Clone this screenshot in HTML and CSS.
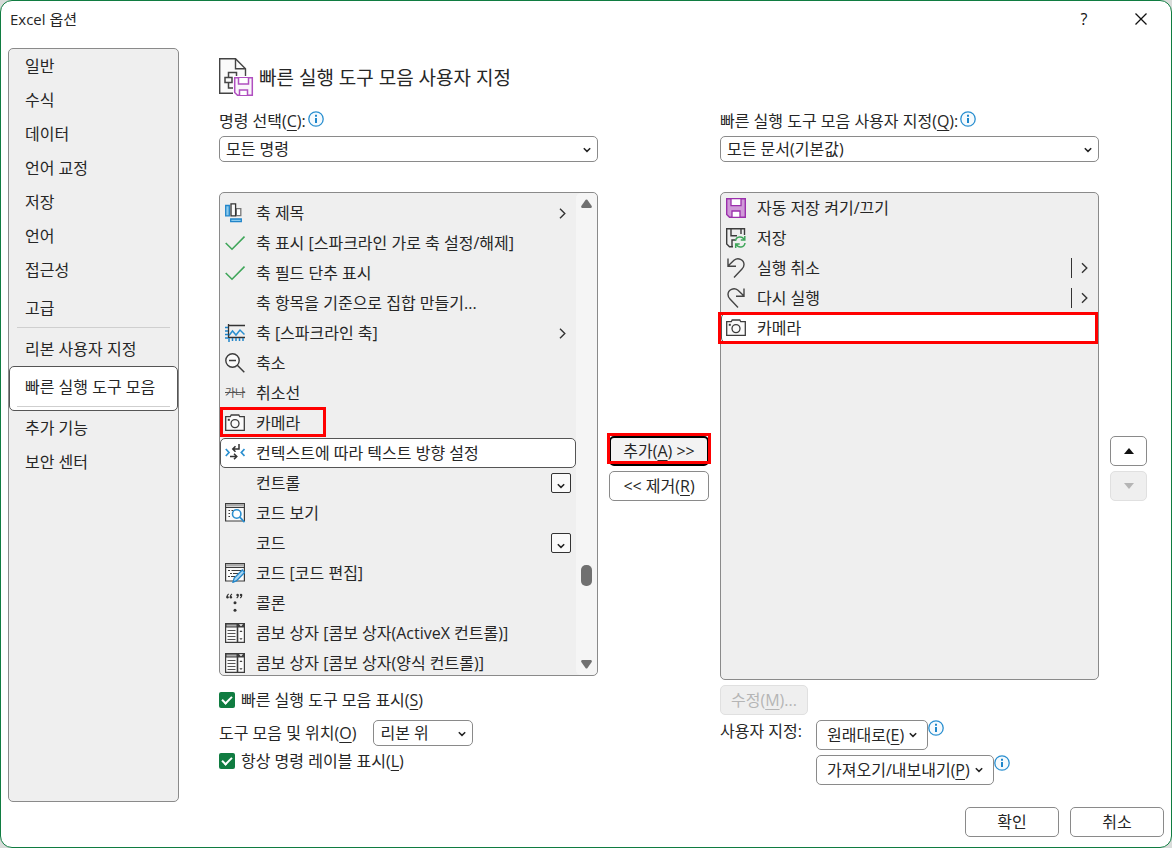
FILE: index.html
```html
<!DOCTYPE html>
<html lang="ko">
<head>
  <meta charset="UTF-8">
  <meta name="viewport" content="width=device-width, initial-scale=1.0">
  <title>Excel 옵션</title>
  <link rel="stylesheet" href="styles.css">
</head>
<body>

  <!-- shared icons -->
  <svg class="defs" width="0" height="0" aria-hidden="true">
    <symbol id="chev-down" viewBox="0 0 8 6"><path d="M.8 1.2 4 4.4 7.2 1.2" fill="none" stroke="#222" stroke-width="1.5"/></symbol>
    <symbol id="chev-right" viewBox="0 0 7 11"><path d="M1 .8 5.8 5.5 1 10.2" fill="none" stroke="#333" stroke-width="1.4"/></symbol>
    <symbol id="info" viewBox="0 0 16 16">
      <circle cx="8" cy="8" r="7.2" fill="#f5fafd" stroke="#2a8fd0" stroke-width="1.3"/>
      <path d="M7 3.8h2v2H7zM7 7h2v5H7z" fill="#1e86cb"/>
    </symbol>
    <symbol id="check" viewBox="0 0 20 20"><path d="M.7 10 7 16.2 19.5 3.6" fill="none" stroke="#3fa65a" stroke-width="1.6"/></symbol>
    <symbol id="camera" viewBox="0 0 20 20">
      <path d="M.7 3.700h4.600L6.200 2h7.600l.9 1.700h4.600v13.600H.7z" fill="#fafafa" stroke="#3c3c3c" stroke-width="1.3"/>
      <circle cx="10" cy="10.600" r="4" fill="none" stroke="#3c3c3c" stroke-width="1.3"/>
      <path d="M2.800 5.800h2v2h-2z" fill="#3c3c3c"/>
    </symbol>
    <symbol id="combo" viewBox="0 0 20 20">
      <path d="M.6.6h18.8v18.8H.6z" fill="#fafafa" stroke="#3c3c3c" stroke-width="1.2"/>
      <path d="M0 0h20v4.5H0z" fill="#3c3c3c"/>
      <path d="M1.500 1.500h10v2h-10z" fill="#aaa"/>
      <path d="M12.500 4v16" stroke="#3c3c3c" stroke-width="1.600"/>
      <path d="M2.500 7.500h8M2.500 10.500h8M2.500 13.500h8M2.500 16.500h8" stroke="#555"/>
      <path d="M14 1.300h4l-2 2z" fill="#fff"/>
      <path d="M14.400 9h3.200L16 7.200zM14.400 15.300h3.200L16 17z" fill="#3c3c3c"/>
    </symbol>
  </svg>

  <div class="dialog">
    <header class="titlebar">
      <span class="title">Excel 옵션</span>
      <button class="title-button help" aria-label="도움말">?</button>
      <button class="title-button" aria-label="닫기">
        <svg width="12" height="12" viewBox="0 0 12 12"><path d="M.5.5l11 11M11.5.5l-11 11" stroke="#111" stroke-width="1.3"/></svg>
      </button>
    </header>

    <div class="content">
      <nav class="sidebar">
        <a href="#">일반</a>
        <a href="#">수식</a>
        <a href="#">데이터</a>
        <a href="#">언어 교정</a>
        <a href="#">저장</a>
        <a href="#">언어</a>
        <a href="#">접근성</a>
        <a href="#" class="divided">고급</a>
        <a href="#">리본 사용자 지정</a>
        <a href="#" class="divided active">빠른 실행 도구 모음</a>
        <a href="#">추가 기능</a>
        <a href="#">보안 센터</a>
      </nav>

      <main class="page">
        <h1 class="page-title">
          <svg width="36" height="39" viewBox="0 0 36 39">
            <path d="M.7.7h15.800l10 10V35.300H.7z" fill="#fafafa" stroke="#444" stroke-width="1.4"/>
            <path d="M16.500.7v10h10" fill="none" stroke="#444" stroke-width="1.4"/>
            <path d="M9.500 19v-4.500h8v4M6 19.500h7v5H6zM9.500 25v5h5" fill="none" stroke="#444" stroke-width="1.5"/>
            <path d="M14 18h22v21H17l-3-3z" fill="#fff"/>
            <path d="M15.700 19.700h17.600v17.600H18.500l-2.800-2.800z" fill="#faf5fb" stroke="#b04fc0" stroke-width="1.5"/>
            <path d="M19.500 20v6h10v-6M20.500 37v-5h8v5" fill="#fff" stroke="#b04fc0" stroke-width="1.5"/>
          </svg>
          빠른 실행 도구 모음 사용자 지정
        </h1>

        <div class="columns">
          <section class="column">
            <div class="field-label">
              <label for="commands">명령 선택(<u>C</u>):</label>
              <svg class="info" width="16" height="16"><use href="#info"/></svg>
            </div>
            <div class="dropdown">
              <select id="commands"><option>모든 명령</option></select>
              <svg class="arrow" width="8" height="6"><use href="#chev-down"/></svg>
            </div>

            <div class="listbox">
              <ul class="items scrolled" role="listbox" aria-label="명령">
                <li role="option">
                  <svg class="icon" viewBox="0 0 20 20">
                    <path d="M.7 2.5h3.600v10.300H.7z" fill="#8ccbee" stroke="#2185c9" stroke-width="1.3"/>
                    <path d="M11.300 5.700h4.500v7h-4.500z" fill="#fff" stroke="#777" stroke-width="1.3"/>
                    <path d="M6 .9h4.600v12H6z" fill="#fafafa" stroke="#333" stroke-width="1.3"/>
                    <path d="M5.700 16h10.600v2.600H5.700z" fill="#8ccbee" stroke="#2185c9" stroke-width="1.3"/>
                  </svg>
                  <span>축 제목</span>
                  <svg class="more" width="7" height="11"><use href="#chev-right"/></svg>
                </li>
                <li role="option">
                  <svg class="icon"><use href="#check"/></svg>
                  <span>축 표시 [스파크라인 가로 축 설정/해제]</span>
                </li>
                <li role="option">
                  <svg class="icon"><use href="#check"/></svg>
                  <span>축 필드 단추 표시</span>
                </li>
                <li role="option">
                  <i class="icon"></i>
                  <span>축 항목을 기준으로 집합 만들기...</span>
                </li>
                <li role="option">
                  <svg class="icon" viewBox="0 0 20 20">
                    <path d="M3.500 2.500H20M3.500 14.500H20" stroke="#333" stroke-width="1.3"/>
                    <path d="M3.500 1v14" stroke="#333" stroke-width="1.3"/>
                    <path d="M0 4.500h3M0 8h3M0 11.500h3M0 15h3M4 15v4M7.500 15v3M11 15v3M14.500 15v3M18 15v3" stroke="#2185c9" stroke-width="1.5"/>
                    <path d="M4 12.500 7.500 8l3.500 4 4-5 4.500 4.500" fill="none" stroke="#2a8fd0" stroke-width="1.5"/>
                  </svg>
                  <span>축 [스파크라인 축]</span>
                  <svg class="more" width="7" height="11"><use href="#chev-right"/></svg>
                </li>
                <li role="option">
                  <svg class="icon" viewBox="0 0 20 20">
                    <circle cx="7.500" cy="7.500" r="6.700" fill="#fafafa" stroke="#3c3c3c" stroke-width="1.4"/>
                    <path d="M4 7.500h7M12.300 12.300l7 7" stroke="#3c3c3c" stroke-width="1.5"/>
                  </svg>
                  <span>축소</span>
                </li>
                <li role="option">
                  <s class="icon strike">가나</s>
                  <span>취소선</span>
                </li>
                <li role="option" class="marked">
                  <svg class="icon"><use href="#camera"/></svg>
                  <span>카메라</span>
                </li>
                <li role="option" class="selected" aria-selected="true">
                  <svg class="icon" viewBox="0 0 20 20">
                    <path d="M.8 6 4 9.500.8 13M19.500 6l-3.200 3.500 3.200 3.500" fill="none" stroke="#2a8fd0" stroke-width="1.7"/>
                    <path d="M14 1v5H8M10.500 3.300 7.800 6l2.700 2.700M5 13.500h6.500M9 10.700l2.800 2.800L9 16.300" fill="none" stroke="#333" stroke-width="1.5"/>
                  </svg>
                  <span>컨텍스트에 따라 텍스트 방향 설정</span>
                </li>
                <li role="option">
                  <i class="icon"></i>
                  <span>컨트롤</span>
                  <i class="gallery"><svg width="8" height="6"><use href="#chev-down"/></svg></i>
                </li>
                <li role="option">
                  <svg class="icon" viewBox="0 0 20 20">
                    <path d="M.6.600h18.800v17.400H.6z" fill="#fafafa" stroke="#3c3c3c" stroke-width="1.2"/>
                    <path d="M1 1h18v2.500H1z" fill="#aaa"/>
                    <path d="M1 4.500h18" stroke="#3c3c3c"/>
                    <path d="M3.500 7.500h1.500M3.500 10.500h1.500M3.500 13.500h1.500M6.500 7.500h2" stroke="#3c3c3c" stroke-width="1.2"/>
                    <circle cx="11.700" cy="11" r="4.200" fill="#fff" stroke="#2a8fd0" stroke-width="1.6"/>
                    <path d="M14.800 14.200l4.700 5" stroke="#2a8fd0" stroke-width="1.8"/>
                  </svg>
                  <span>코드 보기</span>
                </li>
                <li role="option">
                  <i class="icon"></i>
                  <span>코드</span>
                  <i class="gallery"><svg width="8" height="6"><use href="#chev-down"/></svg></i>
                </li>
                <li role="option">
                  <svg class="icon" viewBox="0 0 20 20">
                    <path d="M.6.600h18.800v17.400H.6z" fill="#fafafa" stroke="#3c3c3c" stroke-width="1.2"/>
                    <path d="M1 1h18v2.500H1z" fill="#aaa"/>
                    <path d="M1 4.500h18" stroke="#3c3c3c"/>
                    <path d="M3 7.500h2M6.500 7.500H16M5 10.500h2M8 10.500h6M3 13.500h2M6 13.500h4" stroke="#3c3c3c"/>
                    <path d="M8 19.300l1.200-4.200L17.300 7l2.300 2.400-8 8.300z" fill="#a9d6f2" stroke="#2185c9" stroke-width="1.3"/>
                  </svg>
                  <span>코드 [코드 편집]</span>
                </li>
                <li role="option">
                  <svg class="icon" viewBox="0 0 20 20">
                    <g fill="none" stroke="#333" stroke-width="1.2">
                      <path d="M3.700 1C2.300 1.700 2 2.700 2 4M7 1C5.600 1.700 5.300 2.700 5.300 4M13.200 1.500c.2 1.500-.3 2.700-1.500 3.400M16.700 1.500c.2 1.500-.3 2.700-1.500 3.400"/>
                    </g>
                    <g fill="#333">
                      <circle cx="2.500" cy="4.200" r="1.200"/><circle cx="5.900" cy="4.200" r="1.200"/>
                      <circle cx="12.500" cy="1.900" r="1.200"/><circle cx="16" cy="1.900" r="1.200"/>
                      <circle cx="10" cy="9.800" r="1.500"/><circle cx="10" cy="17.300" r="1.500"/>
                    </g>
                  </svg>
                  <span>콜론</span>
                </li>
                <li role="option">
                  <svg class="icon"><use href="#combo"/></svg>
                  <span>콤보 상자 [콤보 상자(ActiveX 컨트롤)]</span>
                </li>
                <li role="option">
                  <svg class="icon"><use href="#combo"/></svg>
                  <span>콤보 상자 [콤보 상자(양식 컨트롤)]</span>
                </li>
              </ul>
              <div class="scrollbar">
                <svg width="11" height="9" viewBox="0 0 11 9"><path d="M4.700.8Q5.500 0 6.300.8L10.700 7Q11.200 8.500 10 9H1Q-.2 8.500.3 7z" fill="#707070"/></svg>
                <div class="track"><i class="thumb"></i></div>
                <svg width="11" height="9" viewBox="0 0 11 9"><path d="M4.700 8.200Q5.500 9 6.300 8.200L10.700 2Q11.200.5 10 0H1Q-.2.5.3 2z" fill="#707070"/></svg>
              </div>
            </div>

            <div class="options">
              <label class="check-row"><input type="checkbox" checked><span>빠른 실행 도구 모음 표시(<u>S</u>)</span></label>
              <div class="position-row">
                <label for="position">도구 모음 및 위치(<u>O</u>)</label>
                <div class="dropdown small">
                  <select id="position"><option>리본 위</option></select>
                  <svg class="arrow" width="8" height="6"><use href="#chev-down"/></svg>
                </div>
              </div>
              <label class="check-row"><input type="checkbox" checked><span>항상 명령 레이블 표시(<u>L</u>)</span></label>
            </div>
          </section>

          <div class="side-buttons">
            <div class="add-wrap"><button class="btn default">추가(<u>A</u>) &gt;&gt;</button></div>
            <button class="btn">&lt;&lt; 제거(<u>R</u>)</button>
          </div>

          <section class="column">
            <div class="field-label">
              <label for="target">빠른 실행 도구 모음 사용자 지정(<u>Q</u>):</label>
              <svg class="info" width="16" height="16"><use href="#info"/></svg>
            </div>
            <div class="dropdown">
              <select id="target"><option>모든 문서(기본값)</option></select>
              <svg class="arrow" width="8" height="6"><use href="#chev-down"/></svg>
            </div>

            <div class="listbox current">
              <ul class="items" role="listbox" aria-label="빠른 실행 도구 모음">
                <li role="option">
                  <svg class="icon" viewBox="0 0 20 20">
                    <path d="M.7.7h18.600v18.600H3.500L.7 16.500z" fill="#d09ad8" stroke="#9b30ac" stroke-width="1.4"/>
                    <path d="M5 .7h10v7H5zM6 13h8v6.300H6z" fill="#fff" stroke="#9b30ac" stroke-width="1.3"/>
                  </svg>
                  <span>자동 저장 켜기/끄기</span>
                </li>
                <li role="option">
                  <svg class="icon" viewBox="0 0 20 20">
                    <path d="M18.500 7V.7H.7V16l2.800 2.800H7M5 .7v7h6M15 .7V6M6 18.500V12h3" fill="none" stroke="#3c3c3c" stroke-width="1.4"/>
                    <path d="M9.500 13c.6-5 7-5 8.500-1.500M18.800 8v4h-4M19 15c-.6 5-7 5-8.500 1.500M9.700 20v-4h4" fill="none" stroke="#3fa65a" stroke-width="1.5"/>
                  </svg>
                  <span>저장</span>
                </li>
                <li role="option">
                  <svg class="icon" viewBox="0 0 20 20">
                    <path d="M2 .5v7.800h8M2 8 8 2.200C12-1 18 1.500 18 6.500c0 2-1 3.500-2 4.500L8 19.500" fill="none" stroke="#444" stroke-width="1.4"/>
                  </svg>
                  <span>실행 취소</span>
                  <svg class="more split" width="7" height="11"><use href="#chev-right"/></svg>
                </li>
                <li role="option">
                  <svg class="icon" viewBox="0 0 20 20">
                    <path d="M18 .5v7.800h-8M18 8l-6-5.800C8-1 2 1.500 2 6.500c0 2 1 3.500 2 4.500l8 8.500" fill="none" stroke="#444" stroke-width="1.4"/>
                  </svg>
                  <span>다시 실행</span>
                  <svg class="more split" width="7" height="11"><use href="#chev-right"/></svg>
                </li>
                <li role="option" class="selected marked" aria-selected="true">
                  <svg class="icon"><use href="#camera"/></svg>
                  <span>카메라</span>
                </li>
              </ul>
            </div>

            <div class="customize">
              <button class="btn modify" disabled>수정(<u>M</u>)...</button>
              <span class="customize-label">사용자 지정:</span>
              <div class="button-row">
                <button class="btn menu"><span>원래대로(<u>E</u>)</span><svg width="8" height="6"><use href="#chev-down"/></svg></button>
                <svg class="info" width="16" height="16"><use href="#info"/></svg>
              </div>
              <div class="button-row second">
                <button class="btn menu"><span>가져오기/내보내기(<u>P</u>)</span><svg width="8" height="6"><use href="#chev-down"/></svg></button>
                <svg class="info" width="16" height="16"><use href="#info"/></svg>
              </div>
            </div>
          </section>

          <div class="side-buttons">
            <button class="btn" aria-label="위로 이동"><svg width="10" height="6"><path d="M0 6 5 0l5 6z" fill="#111"/></svg></button>
            <button class="btn" aria-label="아래로 이동" disabled><svg width="10" height="6"><path d="M0 0l5 6 5-6z" fill="#b5b5b5"/></svg></button>
          </div>
        </div>
      </main>
    </div>

    <footer class="footer">
      <button class="btn">확인</button>
      <button class="btn">취소</button>
    </footer>
  </div>

</body>
</html>
```

FILE: styles.css
```css
*,
*::before,
*::after {
  box-sizing: border-box;
}

body {
  margin: 0;
  background: #d9dcda;
  color: #262626;
  font-family: "Open Sans", "Noto Sans CJK KR", sans-serif;
  font-size: 16px;
  line-height: 24px;
}

button,
select {
  font: inherit;
  color: inherit;
}

u {
  text-underline-offset: 3px;
  text-decoration-thickness: 1px;
}

svg {
  flex: none;
}

.defs {
  position: absolute;
}

.dialog {
  display: flex;
  flex-direction: column;
  height: 100vh;
  min-height: 640px;
  padding: 0 7px 10px;
  background: #fff;
  border: 1px solid #107c41;
  border-radius: 12px;
}

/* title bar */
.titlebar {
  display: flex;
  align-items: center;
  height: 36px;
  margin-bottom: 11px;
  font-size: 15px;
}

.title {
  flex: 1;
  padding-left: 2px;
}

.title-button {
  display: flex;
  align-items: center;
  justify-content: center;
  width: 46px;
  height: 32px;
  margin-left: 11px;
  padding: 0;
  background: none;
  border: none;
  color: #111;
}

.title-button.help {
  font-size: 16px;
}

.content {
  display: flex;
  flex: 1;
  min-height: 0;
}

/* category list */
.sidebar {
  flex: none;
  width: 171px;
  background: #efefef;
  border: 1px solid #8a8a8a;
  border-radius: 5px;
}

.sidebar a {
  display: block;
  padding: 5px 16px;
  color: inherit;
  text-decoration: none;
  white-space: nowrap;
}

.sidebar .divided {
  position: relative;
  height: 45px;
  padding-top: 9px;
}

.sidebar .divided::after {
  content: "";
  position: absolute;
  left: 8px;
  right: 8px;
  bottom: 4px;
  height: 1px;
  background: #cfcfcf;
}

.sidebar .active {
  padding: 8px 15px;
  background: #fff;
  border: 1px solid #555;
  border-radius: 5px;
}

.sidebar .active::after {
  left: 7px;
  right: 7px;
  bottom: 3px;
}

/* page */
.page {
  display: flex;
  flex: 1;
  flex-direction: column;
  min-width: 0;
  padding: 10px 17px 17px 40px;
}

.page-title {
  display: flex;
  align-items: center;
  gap: 4px;
  margin: 0 0 12px;
  font-size: 19px;
  font-weight: 400;
}

.columns {
  display: grid;
  flex: 1;
  grid-template-columns: minmax(0, 1fr) 100px minmax(0, 1fr) 37px;
  gap: 11px;
  min-height: 0;
}

.column {
  display: flex;
  flex-direction: column;
  min-height: 0;
}

.field-label {
  display: flex;
  gap: 2px;
  margin-bottom: 3px;
  white-space: nowrap;
}

.info {
  margin-top: 2px;
}

.dropdown {
  position: relative;
}

.dropdown select {
  display: block;
  width: 100%;
  height: 26px;
  padding: 0 24px 0 6px;
  appearance: none;
  background: #fff;
  border: 1px solid #8a8a8a;
  border-radius: 5px;
}

.dropdown .arrow {
  position: absolute;
  top: 11px;
  right: 7px;
  pointer-events: none;
}

.dropdown.small {
  width: 100px;
}

/* list boxes */
.listbox {
  display: flex;
  flex: 1;
  min-height: 0;
  margin-top: 30px;
  background: #efefef;
  border: 1px solid #8a8a8a;
  border-radius: 5px;
}

.items {
  flex: 1;
  min-width: 0;
  margin: 0;
  padding: 0;
  list-style: none;
}

.items.scrolled {
  padding-top: 5px;
  overflow: hidden;
}

.items li {
  position: relative;
  display: flex;
  align-items: center;
  gap: 11px;
  height: 30px;
  padding: 0 10px 0 5px;
  white-space: nowrap;
}

.items .selected {
  padding-left: 4px;
  background: #fff;
  border: 1px solid #555;
  border-radius: 5px;
}

.icon {
  flex: none;
  width: 20px;
  height: 20px;
}

.strike {
  color: #555;
  font-size: 11px;
  line-height: 20px;
}

.more {
  margin-left: auto;
}

.split {
  width: 17px;
  height: 20px;
  padding-left: 9px;
  border-left: 1px solid #333;
}

.gallery {
  display: flex;
  align-items: center;
  justify-content: center;
  width: 20px;
  height: 20px;
  margin-left: auto;
  margin-right: -5px;
  padding-top: 5px;
  background: #fafafa;
  border: 1px solid #333;
  border-radius: 2px;
}

/* red frames around the steps to follow */
.marked::after,
.add-wrap::after {
  content: "";
  position: absolute;
  z-index: 1;
  border: 3px solid #f00;
}

.scrolled .marked::after {
  top: -1px;
  left: 0;
  width: 106px;
  height: 30px;
}

.current .marked::after {
  inset: -2px -1px -2px -4px;
}

.add-wrap {
  position: relative;
}

.add-wrap::after {
  inset: -3px -2px 2px;
}

.scrollbar {
  display: flex;
  flex: none;
  flex-direction: column;
  align-items: center;
  width: 21px;
  padding: 6px 0;
  background: #f5f5f5;
  border-radius: 5px;
}

.track {
  position: relative;
  flex: 1;
  width: 11px;
}

.thumb {
  position: absolute;
  top: 79%;
  left: 0;
  width: 11px;
  height: 21px;
  background: #707070;
  border-radius: 5px;
}

/* below the left list */
.options {
  padding: 12px 0;
}

.check-row {
  display: flex;
  align-items: center;
  gap: 6px;
}

.check-row input {
  width: 16px;
  height: 16px;
  margin: 0;
  appearance: none;
  background: #107c41;
  border-radius: 2px;
}

.check-row input:checked::before {
  content: "";
  display: block;
  width: 10px;
  height: 6px;
  margin: 4px 0 0 3px;
  border: solid #fff;
  border-width: 0 0 2px 2px;
  transform: rotate(-45deg);
}

.position-row {
  display: flex;
  align-items: center;
  gap: 17px;
  margin: 8px 0 3px;
}

/* buttons */
.btn {
  display: flex;
  align-items: center;
  justify-content: center;
  height: 30px;
  padding: 0 10px;
  background: #fff;
  border: 1px solid #8a8a8a;
  border-radius: 5px;
  white-space: nowrap;
}

.btn:disabled {
  background: #efefef;
  border-color: #e0e0e0;
  color: #b5b5b5;
}

.btn.default {
  background: #f3f3f3;
  border: 2px solid #000;
}

.btn.menu {
  gap: 5px;
}

.side-buttons {
  display: flex;
  flex-direction: column;
  justify-content: center;
  gap: 5px;
  padding-top: 42px;
}

.side-buttons .btn {
  width: 100%;
}

/* below the right list */
.customize {
  display: grid;
  grid-template-columns: 96px 1fr;
  row-gap: 5px;
  padding-top: 5px;
}

.modify {
  grid-column: 1 / 3;
  justify-self: start;
}

.customize-label {
  line-height: 22px;
}

.button-row {
  display: flex;
}

.button-row .info {
  margin-top: 0;
}

.button-row.second {
  grid-column: 2;
}

.footer {
  display: flex;
  justify-content: flex-end;
  gap: 11px;
  margin-top: 5px;
}

.footer .btn {
  width: 94px;
}
```
